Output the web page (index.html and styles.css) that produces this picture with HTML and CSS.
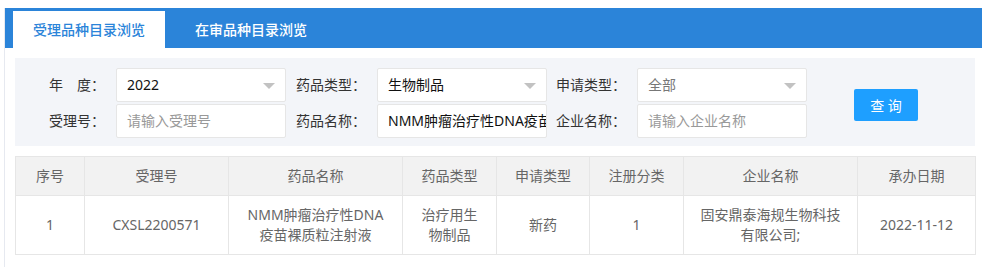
FILE: index.html
```html
<!DOCTYPE html>
<html lang="zh-CN">
<head>
<meta charset="utf-8">
<title>品种目录浏览</title>
<link rel="stylesheet" href="styles.css">
</head>
<body>
<div class="wrap">
  <div class="tabbar">
    <div class="tab active">受理品种目录浏览</div>
    <div class="tab">在审品种目录浏览</div>
  </div>
  <div class="content">
    <div class="panel">
      <div class="grid">
        <div class="label">年　度：</div>
        <div class="field select"><span class="val">2022</span><i class="caret"></i></div>
        <div class="label">药品类型：</div>
        <div class="field select"><span class="val">生物制品</span><i class="caret"></i></div>
        <div class="label">申请类型：</div>
        <div class="field select"><span class="val muted">全部</span><i class="caret"></i></div>
        <div class="btncell"><button class="btn">查 询</button></div>
        <div class="label">受理号：</div>
        <div class="field"><span class="val ph">请输入受理号</span></div>
        <div class="label">药品名称：</div>
        <div class="field clip"><span class="val">NMM肿瘤治疗性DNA疫苗裸质粒注射液</span></div>
        <div class="label">企业名称：</div>
        <div class="field"><span class="val ph">请输入企业名称</span></div>
      </div>
    </div>
    <table class="tbl">
      <colgroup>
        <col class="c1"><col class="c2"><col class="c3"><col class="c4"><col class="c5"><col class="c6"><col class="c7"><col class="c8">
      </colgroup>
      <thead>
        <tr><th>序号</th><th>受理号</th><th>药品名称</th><th>药品类型</th><th>申请类型</th><th>注册分类</th><th>企业名称</th><th>承办日期</th></tr>
      </thead>
      <tbody>
        <tr><td>1</td><td>CXSL2200571</td><td>NMM肿瘤治疗性DNA<br>疫苗裸质粒注射液</td><td>治疗用生<br>物制品</td><td>新药</td><td>1</td><td>固安鼎泰海规生物科技<br>有限公司;</td><td>2022-11-12</td></tr>
      </tbody>
    </table>
  </div>
</div>
</body>
</html>
```

FILE: styles.css
```css
html, body {
  margin: 0;
  padding: 0;
  background: #fff;
}
body {
  font-family: "Noto Sans", "Noto Sans CJK SC", sans-serif;
  font-size: 14px;
  color: #333;
  overflow: hidden;
}
.wrap {
  margin: 8px 0 0 4px;
  border-left: 1px solid #e6e9f0;
  min-height: 259px;
}
.tabbar {
  display: flex;
  height: 40px;
  background: #2b84d9;
  padding: 3px 0 0 8px;
  box-sizing: border-box;
}
.tab {
  padding: 0 20px;
  height: 37px;
  line-height: 37px;
  color: #fff;
  font-weight: 500;
  font-size: 14px;
  letter-spacing: 0;
}
.tab + .tab {
  margin-left: 10px;
}
.tab.active {
  background: #fff;
  color: #2b84d9;
}
.content {
  padding: 10px 7px 0 10px;
}
.panel {
  background: #f3f5f9;
  padding: 10px 0 8px 11px;
}
.grid {
  display: grid;
  grid-template-columns: 90px 170px 91px 170px 90px 170px 111px;
  grid-template-rows: 34px 34px;
  row-gap: 2px;
}
.label {
  text-align: right;
  padding-right: 11px;
  line-height: 34px;
  white-space: nowrap;
  color: #333;
}
.field {
  position: relative;
  background: #fff;
  border: 1px solid #e6e6e6;
  border-radius: 2px;
  box-sizing: border-box;
  height: 34px;
  line-height: 32px;
  padding-left: 10px;
  overflow: hidden;
  white-space: nowrap;
}
.val { color: #111; }
.val.muted { color: #777; }
.val.ph { color: #999; }
.caret {
  position: absolute;
  right: 10px;
  top: 14px;
  width: 0;
  height: 0;
  border-left: 6px solid transparent;
  border-right: 6px solid transparent;
  border-top: 6px solid #c2c2c2;
}
.btncell {
  grid-column: 7;
  grid-row: 1 / span 2;
  display: flex;
  align-items: center;
  padding-left: 47px;
  padding-top: 3px;
}
.btn {
  width: 64px;
  height: 32px;
  border: 0;
  border-radius: 2px;
  background: #1e9fff;
  color: #fff;
  font-family: inherit;
  font-size: 14px;
  padding: 0;
}
.tbl {
  margin-top: 10px;
  width: 960px;
  border-collapse: collapse;
  table-layout: fixed;
  color: #666;
  font-size: 14px;
}
.c1 { width: 69px; }
.c2 { width: 144px; }
.c3 { width: 174px; }
.c4 { width: 94px; }
.c5 { width: 93px; }
.c6 { width: 94px; }
.c7 { width: 174px; }
.c8 { width: 118px; }
.tbl th, .tbl td {
  border: 1px solid #e6e6e6;
  text-align: center;
  padding: 9px 0;
  line-height: 20px;
  font-weight: normal;
}
.tbl th {
  background: #f2f2f2;
  padding: 9px 0;
}
```
